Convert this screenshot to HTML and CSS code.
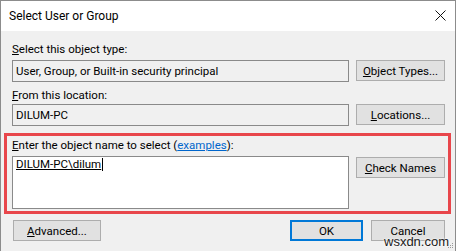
FILE: index.html
```html
<!DOCTYPE html>
<html lang="en">

<head>
    <meta charset="UTF-8">
    <meta name="viewport" content="width=device-width, initial-scale=1.0">
    <title>Select User or Group</title>
    <link rel="stylesheet" href="styles.css">
</head>

<body>
<div class="window">
    <!-- Title bar -->
    <div class="titlebar">
        <span class="title">Select User or Group</span>
        <svg class="close" width="11" height="11" viewBox="0 0 11 11">
            <path d="M0.5 0.5 L10.5 10.5 M10.5 0.5 L0.5 10.5" stroke="#111" stroke-width="1" fill="none"/>
        </svg>
    </div>

    <div class="content">
        <div class="label label-first"><u>S</u>elect this object type:</div>
        <div class="row">
            <div class="field">User, Group, or Built-in security principal</div>
            <button class="btn side"><u>O</u>bject Types...</button>
        </div>

        <div class="label label-second"><u>F</u>rom this location:</div>
        <div class="row row-second">
            <div class="field">DILUM-PC</div>
            <button class="btn side"><u>L</u>ocations...</button>
        </div>

        <!-- Highlighted part of the dialog -->
        <div class="group">
            <div class="label"><u>E</u>nter the object name to select (<a href="#" class="link">examples</a>):</div>
            <div class="row row-names">
                <div class="names"><span class="entry">DILUM-PC\dilum</span><span class="caret"></span></div>
                <button class="btn side check"><u>C</u>heck Names</button>
            </div>
        </div>

        <div class="actions">
            <button class="btn advanced"><u>A</u>dvanced...</button>
            <div class="spacer"></div>
            <button class="btn ok">OK</button>
            <button class="btn cancel">Cancel</button>
        </div>
    </div>

    <div class="watermark">wsxdn.com</div>
    <svg class="grip" width="7" height="7" viewBox="0 0 7 7">
        <rect x="5" y="1" width="1" height="1" fill="#999"/>
        <rect x="3" y="3" width="1" height="1" fill="#999"/>
        <rect x="5" y="3" width="1" height="1" fill="#999"/>
        <rect x="1" y="5" width="1" height="1" fill="#999"/>
        <rect x="3" y="5" width="1" height="1" fill="#999"/>
        <rect x="5" y="5" width="1" height="1" fill="#999"/>
    </svg>
</div>
</body>

</html>
```

FILE: styles.css
```css
/* Windows style dialog */
* {
    box-sizing: border-box;
}

body {
    margin: 0;
    background: #ffffff;
    font-family: Roboto, "Liberation Sans", Arial, sans-serif;
    font-size: 11.5px;
    color: #000;
}

.window {
    position: relative;
    width: 456px;
    height: 251px;
    background-color: #f0f0f0;
    border: 1px solid #8c8c8c;
    border-bottom: none;
    overflow: hidden;
}

.titlebar {
    height: 30px;
    background-color: #fff;
    display: flex;
    align-items: center;
    justify-content: space-between;
    padding: 0 9px 0 8px;
}

.title {
    font-size: 12px;
    line-height: 30px;
}

.close {
    margin-top: -1px;
}

.content {
    padding: 11px 10px 0 11px;
}

.label {
    line-height: 15px;
    height: 15px;
    white-space: nowrap;
}

.link {
    color: #0066cc;
}

.row {
    display: flex;
    margin-top: 3px;
}

.label-second {
    margin-top: 6px;
}

.row-second {
    margin-top: 1px;
}

.field {
    flex: 1;
    height: 22px;
    line-height: 20px;
    padding: 0 3px;
    border: 1px solid #8a8a8a;
    background-color: #f0f0f0;
    white-space: nowrap;
}

.btn {
    font-family: inherit;
    font-size: inherit;
    color: #000;
    height: 21px;
    padding: 0;
    background-color: #e1e1e1;
    border: 1px solid #adadad;
    white-space: nowrap;
}

.side {
    width: 89px;
    margin-left: 7px;
}

/* red highlight round the name entry */
.group {
    margin: 7px -6px 0 -8px;
    padding: 2px 3px 2px 5px;
    border: 3px solid #e8464b;
}

.row-names {
    align-items: flex-start;
}

.names {
    flex: 1;
    height: 53px;
    padding: 0 3px;
    line-height: 15px;
    border: 1px solid #8a8a8a;
    background-color: #fff;
    white-space: nowrap;
}

.entry {
    text-decoration: underline;
}

.caret {
    display: inline-block;
    width: 1px;
    height: 13px;
    margin-left: 1px;
    vertical-align: -3px;
    background-color: #000;
}

.check {
    margin-top: 1px;
}

.actions {
    display: flex;
    margin-top: 6px;
}

.spacer {
    flex: 1;
}

.advanced {
    width: 88px;
    margin-left: 1px;
}

.ok {
    width: 73px;
    border: 2px solid #0078d7;
}

.cancel {
    width: 74px;
    margin-left: 8px;
}

.watermark {
    position: absolute;
    left: 383px;
    top: 233px;
    font-family: "Liberation Sans", Arial, sans-serif;
    font-size: 13px;
    color: #1a1a1a;
    text-shadow: 0 0 2px #fff, 0 0 2px #fff;
}

.grip {
    position: absolute;
    left: 446px;
    top: 241px;
}
```
